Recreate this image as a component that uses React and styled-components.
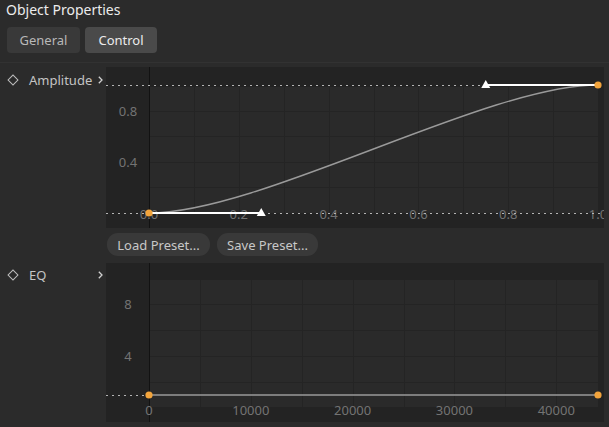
import React from "react";
import styled, { createGlobalStyle } from "styled-components";

const GlobalStyle = createGlobalStyle`
    html, body {
        margin: 0;
        padding: 0;
        background: #2b2b2b;
    }
    body {
        font-family: "Noto Sans", "Open Sans", sans-serif;
        color: #d0d0d0;
    }
`;

const Page = styled.div`
    width: 609px;
    height: 427px;
    overflow: hidden;
    display: flex;
    flex-direction: column;
`;

const Title = styled.div`
    padding-left: 6px;
    font-size: 14px;
    line-height: 20px;
    color: #ececec;
`;

const Tabs = styled.div`
    display: flex;
    gap: 5px;
    padding: 7px 0 0 7px;
`;

const Tab = styled.button`
    height: 26px;
    width: ${props => props.width}px;
    border: none;
    border-radius: 4px;
    font-family: inherit;
    font-size: 13px;
    color: ${props => (props.active ? "#ececec" : "#b8b8b8")};
    background: ${props => (props.active ? "#4a4a4a" : "#393939")};
    padding: 0;
`;

const Separator = styled.div`
    height: 1px;
    margin-top: 9px;
    background: #323232;
`;

const PropertyRow = styled.div`
    display: grid;
    grid-template-columns: 106px 1fr;
    padding-right: 5px;
    margin-top: ${props => props.gap}px;
`;

const Label = styled.div`
    display: flex;
    align-items: center;
    height: 20px;
    margin-top: ${props => props.offset}px;
    padding-left: 9px;
    font-size: 13px;
    color: #c4c4c4;
`;

const LabelText = styled.span`
    margin-left: 12px;
    flex: 1;
`;

const Diamond = styled.span`
    width: 6px;
    height: 6px;
    border: 1.3px solid #bdbdbd;
    transform: rotate(45deg);
`;

const Chevron = styled.svg`
    margin-right: 3px;
    width: 5px;
    height: 8px;
`;

const Content = styled.div`
    display: flex;
    flex-direction: column;
`;

const Panel = styled.div`
    height: ${props => props.height}px;
    background: #232323;
    overflow: hidden;
    svg {
        display: block;
    }
    text {
        font-family: "Noto Sans", "Open Sans", sans-serif;
        font-size: 13px;
        fill: #737373;
    }
`;

const ButtonRow = styled.div`
    display: flex;
    gap: 7px;
    padding: 5px 0 0 1px;
`;

const PresetButton = styled.button`
    height: 23px;
    width: ${props => props.width}px;
    border: none;
    border-radius: 11px;
    background: #393939;
    color: #c8c8c8;
    font-family: inherit;
    font-size: 13px;
    padding: 0;
`;

const W = 498;
const AX = 43;
const PR = 492;
const ORANGE = "#f2a43c";

const Dotted = ({ y, x1 = 0, x2 = W }) => (
    <line x1={x1} y1={y} x2={x2} y2={y} stroke="#b4b4b4" strokeWidth="1" strokeDasharray="2 4" />
);

const Tri = ({ x, y }) => (
    <polygon points={`${x - 4.5},${y + 3} ${x + 4.5},${y + 3} ${x},${y - 5}`} fill="#ffffff" />
);

const Grid = ({ top, bottom, xs, ys }) => (
    <g>
        <rect x={AX + 1} y={top} width={PR - AX - 1} height={bottom - top} fill="#2a2a2a" />
        {xs.map(x => (
            <line key={"x" + x} x1={x} y1={top} x2={x} y2={bottom} stroke="#242424" strokeWidth="1" />
        ))}
        {ys.map(y => (
            <line key={"y" + y} x1={AX} y1={y} x2={PR} y2={y} stroke="#242424" strokeWidth="1" />
        ))}
    </g>
);

const AmplitudeChart = () => {
    const H = 161;
    const zero = 146;
    const one = 18;
    const sx = v => AX + v * (PR - AX);
    const sy = v => zero - v * (zero - one);
    const xs = [1, 2, 3, 4, 5, 6, 7, 8, 9].map(i => Math.round(sx(i / 10)) + 0.5);
    const ys = [0.2, 0.4, 0.6, 0.8].map(v => Math.round(sy(v)) + 0.5);
    return (
        <svg width={W} height={H}>
            <Grid top={20} bottom={zero} xs={xs} ys={ys} />
            <line x1={AX + 0.5} y1="0" x2={AX + 0.5} y2={H} stroke="#121212" strokeWidth="1" />
            <text x="22" y={sy(0.8) + 5} textAnchor="middle">0.8</text>
            <text x="22" y={sy(0.4) + 5} textAnchor="middle">0.4</text>
            {[0, 0.2, 0.4, 0.6, 0.8, 1].map(v => (
                <text key={v} x={sx(v)} y={zero + 6} textAnchor="middle">{v.toFixed(1)}</text>
            ))}
            <Dotted y={one + 0.5} />
            <Dotted y={zero + 0.5} />
            <path
                d={`M${sx(0)},${zero} C${sx(0.25)},${zero} ${sx(0.75)},${one} ${sx(1)},${one}`}
                fill="none"
                stroke="#9a9a9a"
                strokeWidth="1.4"
            />
            <line x1={sx(0)} y1={zero} x2={sx(0.25)} y2={zero} stroke="#fff" strokeWidth="2" />
            <line x1={sx(0.75)} y1={one} x2={sx(1)} y2={one} stroke="#fff" strokeWidth="2" />
            <Tri x={sx(0.25)} y={zero} />
            <Tri x={sx(0.75)} y={one} />
            <circle cx={sx(0)} cy={zero} r="3.6" fill={ORANGE} />
            <circle cx={sx(1)} cy={one} r="3.6" fill={ORANGE} />
        </svg>
    );
};

const EqChart = () => {
    const H = 159;
    const zero = 145;
    const unit = 13;
    const sx = v => AX + (v / 44100) * (PR - AX);
    const sy = v => zero - v * unit;
    const xs = [5000, 10000, 15000, 20000, 25000, 30000, 35000, 40000].map(v => Math.round(sx(v)) + 0.5);
    const ys = [2, 4, 6, 8].map(v => Math.round(sy(v)) + 0.5);
    return (
        <svg width={W} height={H}>
            <Grid top={17} bottom={144} xs={xs} ys={ys} />
            <line x1={AX + 0.5} y1="0" x2={AX + 0.5} y2={H} stroke="#121212" strokeWidth="1" />
            <text x="22" y={sy(8) + 5} textAnchor="middle">8</text>
            <text x="22" y={sy(4) + 5} textAnchor="middle">4</text>
            {[0, 10000, 20000, 30000, 40000].map(v => (
                <text key={v} x={sx(v)} y={zero + 7} textAnchor="middle">{v}</text>
            ))}
            <Dotted y={sy(1) + 0.5} x2={AX} />
            <line x1={AX} y1={sy(1)} x2={PR} y2={sy(1)} stroke="#9a9a9a" strokeWidth="1.6" />
            <circle cx={AX} cy={sy(1)} r="3.6" fill={ORANGE} />
            <circle cx={PR} cy={sy(1)} r="3.6" fill={ORANGE} />
        </svg>
    );
};

const PropertyLabel = ({ name, offset }) => (
    <Label offset={offset}>
        <Diamond />
        <LabelText>{name}</LabelText>
        <Chevron viewBox="0 0 5 8">
            <path d="M0.8,0.8 L4,4 L0.8,7.2" fill="none" stroke="#d0d0d0" strokeWidth="1.3" />
        </Chevron>
    </Label>
);

const App = () => {
    return (
        <Page>
            <GlobalStyle />
            <Title>Object Properties</Title>
            <Tabs>
                <Tab width={73}>General</Tab>
                <Tab width={72} active>Control</Tab>
            </Tabs>
            <Separator />
            <PropertyRow gap={4}>
                <PropertyLabel name="Amplitude" offset={3} />
                <Content>
                    <Panel height={161}>
                        <AmplitudeChart />
                    </Panel>
                    <ButtonRow>
                        <PresetButton width={103}>Load Preset...</PresetButton>
                        <PresetButton width={101}>Save Preset...</PresetButton>
                    </ButtonRow>
                </Content>
            </PropertyRow>
            <PropertyRow gap={7}>
                <PropertyLabel name="EQ" offset={2} />
                <Content>
                    <Panel height={159}>
                        <EqChart />
                    </Panel>
                </Content>
            </PropertyRow>
        </Page>
    );
};

export default App;
